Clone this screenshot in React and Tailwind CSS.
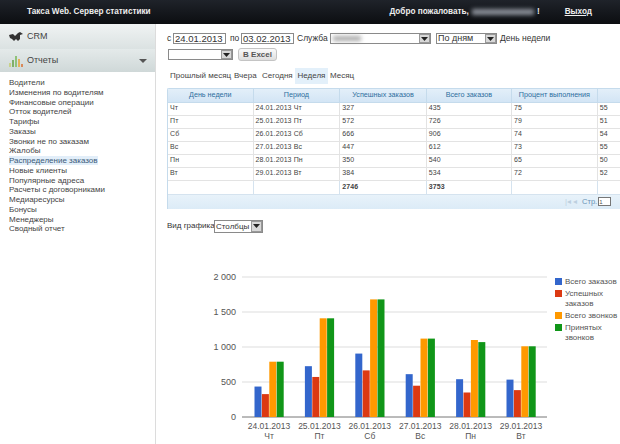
const nav = ["Водители","Изменения по водителям","Финансовые операции","Отток водителей","Тарифы","Заказы","Звонки не по заказам","Жалобы","Распределение заказов","Новые клиенты","Популярные адреса","Расчеты с договорниками","Медиаресурсы","Бонусы","Менеджеры","Сводный отчет"];
const rows = [
  ["Чт","24.01.2013 Чт","327","435","75","55"],
  ["Пт","25.01.2013 Пт","572","726","79","51"],
  ["Сб","26.01.2013 Сб","666","906","74","54"],
  ["Вс","27.01.2013 Вс","447","612","73","55"],
  ["Пн","28.01.2013 Пн","350","540","65","50"],
  ["Вт","29.01.2013 Вт","384","534","72","52"],
];
const heads = ["День недели","Период","Успешных заказов","Всего заказов","Процент выполнения",""];
const widths = ["w-[88px]","w-[89px]","w-[89px]","w-[88px]","w-[88px]","w-[30px]"];
const chart = [
  ["24.01.2013","Чт",[435,327,790,790]],
  ["25.01.2013","Пт",[726,572,1410,1410]],
  ["26.01.2013","Сб",[906,666,1680,1680]],
  ["27.01.2013","Вс",[612,447,1120,1120]],
  ["28.01.2013","Пн",[540,350,1100,1070]],
  ["29.01.2013","Вт",[534,384,1010,1010]],
];
const colors = ["#3366cc","#dc3912","#ff9900","#109618"];

function Arrow() {
  return (
    <span className="flex h-full w-[11px] shrink-0 items-center justify-center border border-[#999] bg-[#d8d8d8]">
      <svg width="7" height="4" viewBox="0 0 7 4"><path d="M0 0h7L3.5 4z" fill="#222" /></svg>
    </span>
  );
}
function Select({ w, h = "h-[11px]", children }) {
  return (
    <span className={`flex ${w} ${h} shrink-0 items-center justify-between border border-[#8a8a8a] bg-white pl-[1px] text-[9px] leading-none text-[#333]`}>
      <span className="min-w-0 whitespace-nowrap">{children}</span>
      <Arrow />
    </span>
  );
}
function DateBox({ v }) {
  return <span className="flex h-[11px] w-[53px] shrink-0 items-center border border-[#8a8a8a] bg-white pl-[1px] text-[9.5px] leading-none text-[#333]">{v}</span>;
}
function Chart() {
  const base = 147, scale = 140 / 2000;
  return (
    <svg width="386" height="174" viewBox="7 0 386 174" className="block" fontFamily="'Liberation Sans', sans-serif">
      {[0, 500, 1000, 1500, 2000].map((t) => {
        const y = base - t * scale;
        return (
          <g key={t}>
            <line x1="82" x2="387" y1={y} y2={y} stroke={t === 0 ? "#777" : "#ddd"} strokeWidth="1" />
            <text x="76" y={y + 3} textAnchor="end" fontSize="9" fill="#555">{t === 0 ? "0" : t === 500 ? "500" : t === 1000 ? "1 000" : t === 1500 ? "1 500" : "2 000"}</text>
          </g>
        );
      })}
      {chart.map(([d, w, vals], i) => {
        const x0 = 94.5 + i * 50.4;
        return (
          <g key={d}>
            {vals.map((v, j) => (
              <rect key={j} x={x0 + j * 7.4} y={base - v * scale} width="7" height={v * scale} fill={colors[j]} />
            ))}
            <text x={x0 + 14.5} y="159" textAnchor="middle" fontSize="8.5" fill="#555">{d}</text>
            <text x={x0 + 14.5} y="169" textAnchor="middle" fontSize="8.5" fill="#555">{w}</text>
          </g>
        );
      })}
    </svg>
  );
}
function Legend() {
  const items = [["Всего заказов",colors[0]],["Успешных заказов",colors[1]],["Всего звонков",colors[2]],["Принятых звонков",colors[3]]];
  return (
    <div className="ml-[2px] flex w-[65px] flex-col gap-[2px] pt-[7px] text-[8px] leading-[10px] text-[#555]">
      {items.map(([t, c]) => (
        <div key={t} className="flex gap-[3px]">
          <span className="mt-[1px] h-[7px] w-[7px] shrink-0" style={{ background: c }} />
          <span className="w-[54px]">{t}</span>
        </div>
      ))}
    </div>
  );
}

export default function App() {
  return (
    <div className="flex h-[444px] w-[620px] flex-col overflow-hidden bg-white font-['Liberation_Sans',sans-serif] text-[#333]">
      <header className="flex h-6 shrink-0 items-center bg-gradient-to-b from-[#1f232a] to-[#0c0e11] pl-[27px] pr-[28px] text-[8.2px] font-bold text-[#eee]">
        <span>Такса Web. Сервер статистики</span>
        <span className="ml-auto flex items-center">
          Добро пожаловать,
          <span className="mx-[3px] h-[6px] w-[62px] bg-[#8a8f98] blur-[2px]" />
          !
        </span>
        <span className="ml-[25px] underline">Выход</span>
      </header>
      <div className="flex min-h-0 flex-1">
        <aside className="w-[156px] shrink-0 border-r border-[#dcdcdc]">
          <div className="flex h-[25px] items-center gap-[4px] bg-gradient-to-b from-[#f0f3f3] to-[#dbe2e2] pl-[9px] text-[9px] text-[#444]">
            <svg width="14" height="10" viewBox="0 0 14 10"><path d="M0 3 4 2 6 4 9 1 11 0 14 2 11 3 11 7 9 9 7 7 5 9 3 7 1 6z" fill="#333" /></svg>
            CRM
          </div>
          <div className="flex h-[23px] items-center gap-[4px] bg-gradient-to-b from-[#e4eaea] to-[#cfd8d8] pl-[9px] pr-[8px] text-[9px] text-[#444]">
            <svg width="14" height="13" viewBox="0 0 14 13">
              <rect x="0" y="9" width="2" height="4" fill="#c9d28a" />
              <rect x="3" y="6" width="2" height="7" fill="#7fb069" />
              <rect x="6" y="2" width="2" height="11" fill="#8fc27a" />
              <rect x="9" y="5" width="2" height="8" fill="#e3b25a" />
              <rect x="12" y="10" width="2" height="3" fill="#d98a5a" />
            </svg>
            Отчеты
            <svg className="ml-auto" width="8" height="4" viewBox="0 0 8 4"><path d="M0 0h8L4 4z" fill="#555" /></svg>
          </div>
          <ul className="pl-[9px] pt-[6px] text-[8px] leading-[9.75px] text-[#444]">
            {nav.map((n) => (
              <li key={n}><span className={n === "Распределение заказов" ? "bg-[#e2eef9] text-[#3b5a78]" : ""}>{n}</span></li>
            ))}
          </ul>
        </aside>
        <main className="min-w-0 flex-1 pl-[11px] pt-[9px]">
          <div className="flex h-[11px] items-center whitespace-nowrap text-[8.5px]">
            <span className="w-[6px]">с</span>
            <DateBox v="24.01.2013" />
            <span className="w-[15px] pl-[4px]">по</span>
            <DateBox v="03.02.2013" />
            <span className="w-[36px] pl-[3px]">Служба</span>
            <Select w="w-[101px]"><span className="ml-[1px] block h-[5px] w-[28px] bg-[#aaa] blur-[2px]" /></Select>
            <span className="w-[5px] shrink-0" />
            <Select w="w-[61px]">По дням</Select>
            <span className="ml-[3px]">День недели</span>
          </div>
          <div className="mt-[4px] flex h-[13px] items-center pl-[1px]">
            <Select w="w-[65px]" />
            <span className="ml-[5px] flex h-[13px] w-[39px] items-center justify-center rounded-[3px] border border-[#c4c4c4] bg-gradient-to-b from-[#fafafa] to-[#dedede] text-[8px] font-bold text-[#555]">В Excel</span>
          </div>
          <div className="mt-[7px] flex h-[16px] items-center whitespace-nowrap pl-[3px] text-[8px] text-[#444]">
            <span className="w-[64px]">Прошлый месяц</span>
            <span className="w-[28px]">Вчера</span>
            <span className="w-[33px]">Сегодня</span>
            <span className="flex h-full w-[33px] items-center justify-center bg-[#e3f0fa]">Неделя</span>
            <span className="ml-[2px]">Месяц</span>
          </div>
          <div className="mt-[4px] w-[460px] rounded-t-[2px] border-l border-t border-[#c5dbec]">
            <table className="table-fixed border-collapse text-[7px] text-[#444]">
              <thead>
                <tr className="h-[13px] bg-gradient-to-b from-[#e3eff9] to-[#d3e5f5]">
                  {heads.map((h, i) => (
                    <th key={i} className={`${widths[i]} border-r border-b border-[#c5dbec] p-0 text-center text-[7.2px] font-normal text-[#2e6e9e]`}>{h}</th>
                  ))}
                </tr>
              </thead>
              <tbody>
                {rows.map((r) => (
                  <tr key={r[0]} className="h-[13px]">
                    {r.map((c, i) => (
                      <td key={i} className="border-r border-b border-[#e3e3e3] p-0 pl-[2px] tracking-[0.1px]">{c}</td>
                    ))}
                  </tr>
                ))}
                <tr className="h-[14px] border-t border-[#c5dbec] font-bold">
                  {["","","2746","3753","",""].map((c, i) => (
                    <td key={i} className="border-r border-b border-[#d5e3ef] p-0 pl-[2px] tracking-[0.1px]">{c}</td>
                  ))}
                </tr>
              </tbody>
            </table>
            <div className="flex h-[14px] items-center bg-gradient-to-b from-[#e8f2fa] to-[#dcebf7] pl-[397px] text-[7.5px] text-[#6a93b5]">
              <span className="text-[#bdd0e0]">|◂ ◂</span>
              <span className="ml-[5px] mr-[1px]">Стр.</span>
              <span className="h-[9px] w-[13px] border border-[#777] bg-white text-[6px] leading-[8px] text-[#555]">1</span>
            </div>
          </div>
          <div className="mt-[11px] flex h-[13px] items-center whitespace-nowrap text-[8px]">
            <span className="w-[47px]">Вид графика</span>
            <Select w="w-[49px]" h="h-[13px]"><span className="text-[8px]">Столбцы</span></Select>
          </div>
          <div className="mt-[37px] flex">
            <div className="w-[386px] shrink-0"><Chart /></div>
            <Legend />
          </div>
        </main>
      </div>
    </div>
  );
}
